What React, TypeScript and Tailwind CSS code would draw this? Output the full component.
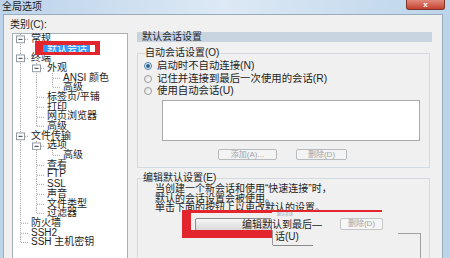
import React from 'react';

type Row = { g: string; t: string; e?: boolean; s?: boolean };

const rows: Row[] = [
  { g: 'T', t: '常规', e: true },
  { g: 'IL', t: '默认会话', s: true },
  { g: 'T', t: '终端', e: true },
  { g: 'IT', t: '外观', e: true },
  { g: 'IIT', t: 'ANSI 颜色' },
  { g: 'IIL', t: '高级' },
  { g: 'IT', t: '标签页/平铺' },
  { g: 'IT', t: '打印' },
  { g: 'IT', t: '网页浏览器' },
  { g: 'IL', t: '高级' },
  { g: 'T', t: '文件传输', e: true },
  { g: 'IT', t: '选项', e: true },
  { g: 'IIL', t: '高级' },
  { g: 'IT', t: '查看' },
  { g: 'IT', t: 'FTP' },
  { g: 'IT', t: 'SSL' },
  { g: 'IT', t: '声音' },
  { g: 'IT', t: '文件类型' },
  { g: 'IL', t: '过滤器' },
  { g: 'T', t: '防火墙' },
  { g: 'T', t: 'SSH2' },
  { g: 'L', t: 'SSH 主机密钥' },
];

const radios = ['启动时不自动连接(N)', '记住并连接到最后一次使用的会话(R)', '使用自动会话(U)'];

// one indent column of the tree: dotted guide lines + optional [-] box
function Guide({ k, exp }: { k: string; exp?: boolean }) {
  return (
    <svg width="16" height="9.7" viewBox="0 0 16 10" preserveAspectRatio="none" className="shrink-0">
      {k !== ' ' && <line x1="7.5" x2="7.5" y1="0" y2={k === 'L' ? 5.5 : 10} stroke="#a3a3a3" strokeDasharray="1 1" />}
      {(k === 'T' || k === 'L') && <line x1="8" x2="16" y1="5.5" y2="5.5" stroke="#a3a3a3" strokeDasharray="1 1" />}
      {exp && (
        <>
          <rect x="3.5" y="2" width="8" height="7" fill="#fff" stroke="#8f9aa3" />
          <line x1="5.5" x2="9.5" y1="5.5" y2="5.5" stroke="#333" />
        </>
      )}
    </svg>
  );
}

function Radio({ on }: { on?: boolean }) {
  return (
    <div className={`w-[8px] h-[8px] rounded-full border flex items-center justify-center ${on ? 'border-[#4b7fae] bg-[#e8f1f9]' : 'border-[#9a9a9a] bg-gradient-to-br from-[#e4e4e4] to-[#fafafa]'}`}>
      {on && <div className="w-[4px] h-[4px] rounded-full bg-[#2f5f8f]" />}
    </div>
  );
}

export default function App() {
  return (
    <div className="relative w-[450px] h-[258px] overflow-hidden flex flex-col bg-gradient-to-r from-[#bcd3ea] via-[#dde9f5] to-[#bcd4ea] font-['Liberation_Sans','Noto_Sans_CJK_SC',sans-serif] text-[#1e1e1e]">
      {/* title bar */}
      <div className="h-[14px] flex justify-between shrink-0">
        <span className="ml-[2px] mt-[1px] text-[10px] leading-[11px]">全局选项</span>
        <div className="mr-[5px] w-[39px] h-[10px] rounded-b-[3px] border border-t-0 border-[#7d3328] bg-gradient-to-b from-[#e08a7a] to-[#c4402f] flex items-center justify-center text-white text-[8px] leading-[8px] font-bold">x</div>
      </div>

      {/* dialog body */}
      <div className="flex-1 ml-[3px] mr-[7px] bg-[#f0f0f0] border-l border-t border-r border-[#9aabbc] flex">
        {/* category tree */}
        <div className="w-[124px] flex flex-col shrink-0">
          <div className="ml-[6px] mt-[4px] h-[12px] text-[10px] leading-[12px]">类别(C):</div>
          <div className="ml-[8px] mt-[2px] w-[116px] flex-1 bg-white border border-[#a7b0b8]">
            {rows.map((r, i) => (
              <div key={i} className="flex items-center h-[9.7px]">
                {r.g.split('').map((k, j) => (
                  <Guide key={j} k={k} exp={r.e && j === r.g.length - 1} />
                ))}
                <span className={`text-[10px] leading-[10px] whitespace-nowrap ${r.s ? 'ml-[-3px] pl-[5px] pr-[3px] bg-[#3399ff] text-white' : 'ml-[2px]'}`}>{r.t}</span>
              </div>
            ))}
          </div>
        </div>

        {/* settings panel */}
        <div className="ml-[9px] mt-[17px] w-[295px] flex flex-col">
          <div className="h-[10px] bg-[#c8d5e1] pl-[5px] text-[10px] leading-[10px] text-[#1f2a33]">默认会话设置</div>

          <fieldset className="mt-[6px] w-[293px] border border-[#d3dae0] pb-[7px]">
            <legend className="ml-[7px] text-[10px] leading-[10px]">自动会话设置(O)</legend>
            <div className="pt-[2px] pl-[6px]">
              {radios.map((r, i) => (
                <div key={i} className="flex items-center h-[12.5px]">
                  <Radio on={i === 0} />
                  <span className="ml-[5px] text-[10.4px] leading-[10px] whitespace-nowrap">{r}</span>
                </div>
              ))}
            </div>
            <div className="ml-[24px] mt-[2.5px] w-[258px] h-[41px] bg-white border border-[#a9a9a9]" />
            <div className="flex ml-[80px] mt-[8px] gap-[19px]">
              <div className="w-[59px] h-[11px] border border-[#b9bcbf] bg-[#f4f4f4] rounded-[2px] text-[8px] leading-[9px] text-[#a3a3a3] text-center">添加(A)...</div>
              <div className="w-[51px] h-[11px] border border-[#b9bcbf] bg-[#f4f4f4] rounded-[2px] text-[8px] leading-[9px] text-[#a3a3a3] text-center">删除(D)</div>
            </div>
          </fieldset>

          <fieldset className="mt-[5px] w-[293px] h-[120px] border border-[#d3dae0]">
            <legend className="ml-[5px] text-[10px] leading-[10px]">编辑默认设置(E)</legend>
            <div className="pl-[17px] pt-[1px] text-[10px] leading-[9.7px] whitespace-nowrap">
              <div>当创建一个新会话和使用“快速连接”时，</div>
              <div>默认的会话设置会被使用。</div>
              <div>单击下面的按钮上以更改默认的设置。</div>
            </div>
            <div className="ml-[57px] mt-[5px] w-[77px] h-[13px] border border-[#8a8a8a] rounded-[2px] bg-gradient-to-b from-[#f6f6f6] to-[#dadada] flex items-center">
              <span className="ml-[46px] text-[10px] leading-[10px] whitespace-nowrap">编辑默认到最后—</span>
            </div>
          </fieldset>
        </div>
      </div>

      {/* red highlight on the selected tree item */}
      <div className="absolute left-[35px] top-[41px] w-[65px] h-[14px] border-t-[4px] border-l-[8px] border-b-[3px] border-r-[5px] border-[#e3262e]" />

      {/* red highlight around the edit button, and the pasted-over piece */}
      <div className="absolute left-[182px] top-[210px] w-[90px] h-[28px] border-t-[3px] border-l-[9px] border-b-[8px] border-[#e3262e]" />
      <div className="absolute left-[272px] top-[210px] w-[110px] h-[2px] bg-[#e3262e]" />
      <div className="absolute left-[277px] top-[213px] text-[4px] leading-[4px] text-[#9a9a9a]">默认会话</div>
      <div className="absolute left-[340px] top-[218px] w-[43px] h-[12px] border border-[#c4c7ca] bg-[#f6f6f6] rounded-[2px] text-[8px] leading-[10px] text-[#a3a3a3] text-center">删除(D)</div>
      <div className="absolute left-[272px] top-[230px] w-[1px] h-[15px] bg-[#9a9a9a]" />
      <div className="absolute left-[275px] top-[232px] text-[10px] leading-[10px]">话(U)</div>
      <div className="absolute left-[273px] top-[245px] w-[40px] h-[1px] bg-[#8a8a8a]" />
      <div className="absolute left-[398px] top-[233px] w-[23px] h-[30px] border-t border-r border-[#a0a0a0]" />
    </div>
  );
}
